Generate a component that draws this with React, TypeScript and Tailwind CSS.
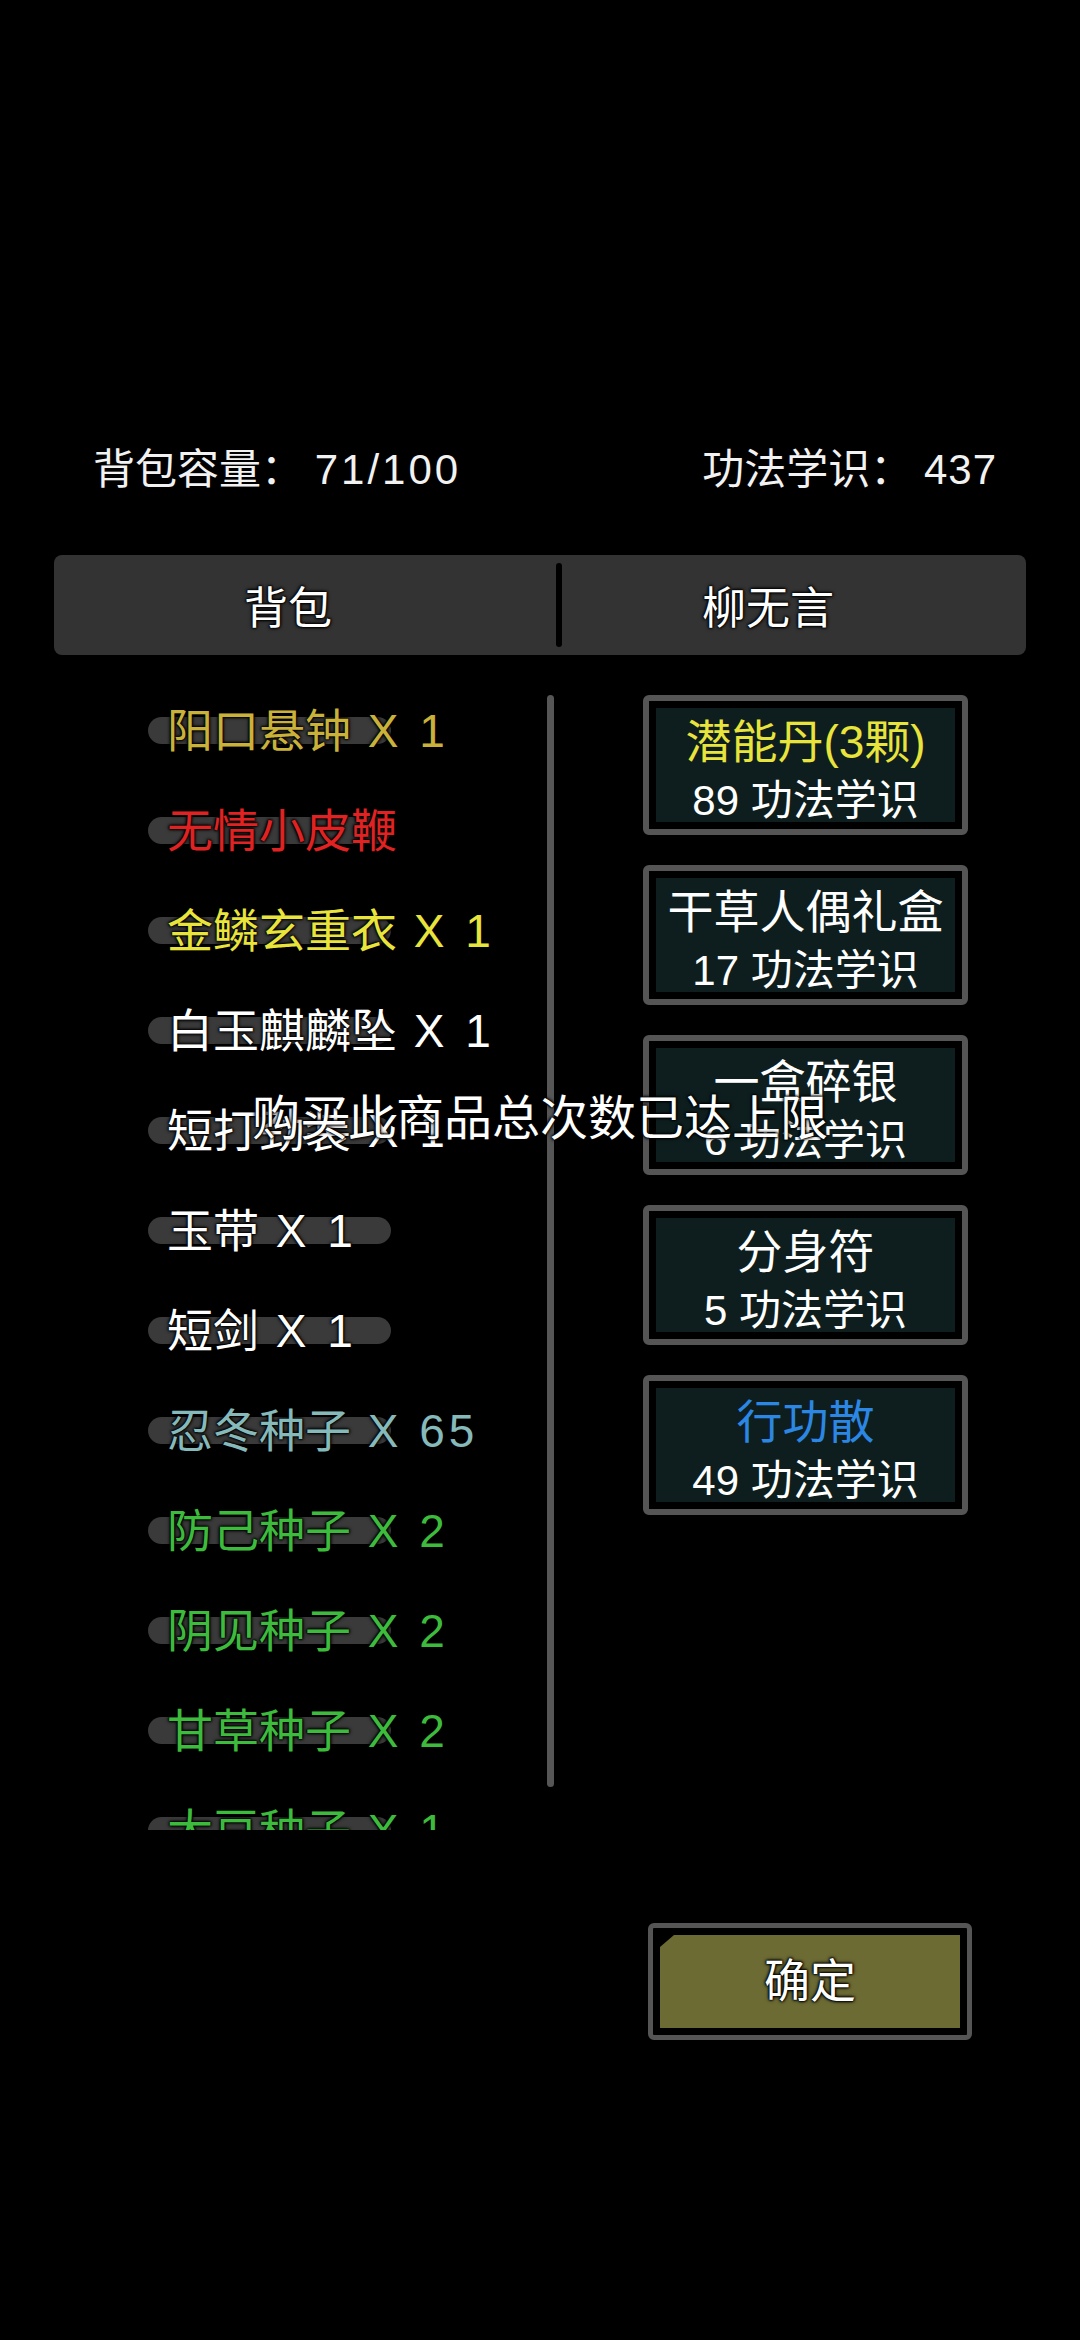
import React from 'react'

type BagItem = {name: string; qty?: number; color: string}

const bagItems: BagItem[] = [
  {name: '阳口悬钟', qty: 1, color: 'text-[#c9b13a]'},
  {name: '无情小皮鞭', color: 'text-[#e12222]'},
  {name: '金鳞玄重衣', qty: 1, color: 'text-[#e8e43c]'},
  {name: '白玉麒麟坠', qty: 1, color: 'text-white'},
  {name: '短打劲装', qty: 1, color: 'text-white'},
  {name: '玉带', qty: 1, color: 'text-white'},
  {name: '短剑', qty: 1, color: 'text-white'},
  {name: '忍冬种子', qty: 65, color: 'text-[#86baba]'},
  {name: '防己种子', qty: 2, color: 'text-[#3dbb3d]'},
  {name: '阴见种子', qty: 2, color: 'text-[#3dbb3d]'},
  {name: '甘草种子', qty: 2, color: 'text-[#3dbb3d]'},
  {name: '大豆种子', qty: 1, color: 'text-[#3dbb3d]'},
]

type ShopItem = {name: string; price: number; color: string}

const shopItems: ShopItem[] = [
  {name: '潜能丹(3颗)', price: 89, color: 'text-[#e8e43c]'},
  {name: '干草人偶礼盒', price: 17, color: 'text-white'},
  {name: '一盒碎银', price: 6, color: 'text-white'},
  {name: '分身符', price: 5, color: 'text-white'},
  {name: '行功散', price: 49, color: 'text-[#2b87e3]'},
]

const outline = '[text-shadow:0_0_2px_#000,0_0_2px_#000,0_0_3px_#000,0_0_4px_#000]'

function BagRow({item}: {item: BagItem}) {
  return (
    <div className="relative h-[100px] flex items-center">
      <div className="absolute left-0 top-[36px] h-[27px] w-[243px] rounded-full bg-[#3a3a3a]" />
      <span className={`relative pl-[19px] text-[46px] leading-[56px] whitespace-nowrap ${item.color} ${outline}`}>
        {item.name}
        {item.qty !== undefined && <span className="tracking-[4px]"> X {item.qty}</span>}
      </span>
    </div>
  )
}

function ShopButton({item}: {item: ShopItem}) {
  return (
    <div className="h-[140px] w-[325px] rounded-[6px] border-[6px] border-[#555555] bg-black p-[7px]">
      <div className="flex h-full flex-col items-center bg-[#0e1e1e] pt-[6px]">
        <span className={`text-[46px] leading-[56px] whitespace-nowrap ${item.color}`}>{item.name}</span>
        <span className="mt-[3px] text-[42px] leading-[56px] text-white whitespace-nowrap">
          {item.price} 功法学识
        </span>
      </div>
    </div>
  )
}

export default function App() {
  return (
    <div className="relative h-[2340px] w-[1080px] overflow-hidden bg-black pt-[445px] font-['Liberation_Sans','Noto_Sans_CJK_SC',sans-serif] text-white">
      {/* header */}
      <div className="flex justify-between pl-[93px] pr-[83px] text-[42px] leading-[50px] text-[#f2f2f2]">
        <span>
          背包容量： <span className="tracking-[3px]">71/100</span>
        </span>
        <span>
          功法学识： <span className="tracking-[1px]">437</span>
        </span>
      </div>

      {/* tabs */}
      <div className="mx-[54px] mt-[60px] flex h-[100px] rounded-[8px] bg-[#333333]">
        <div className={`flex flex-1 items-center justify-center pr-[34px] pt-[8px] text-[44px] ${outline}`}>背包</div>
        <div className="my-[8px] w-[6px] rounded-full bg-black" />
        <div className={`flex w-[464px] items-center justify-center pr-[52px] pt-[8px] text-[44px] ${outline}`}>
          柳无言
        </div>
      </div>

      {/* main */}
      <div className="mt-[26px] flex">
        <div className="ml-[148px] h-[1149px] w-[399px] overflow-hidden">
          {bagItems.map((item) => (
            <BagRow key={item.name} item={item} />
          ))}
        </div>
        <div className="mt-[14px] h-[1092px] w-[7px] rounded-full bg-[#565656]" />
        <div className="ml-[89px] mt-[14px] flex flex-col gap-[30px]">
          {shopItems.map((item) => (
            <ShopButton key={item.name} item={item} />
          ))}
        </div>
      </div>

      {/* confirm */}
      <div className="mt-[93px] flex justify-end pr-[108px]">
        <div className="h-[117px] w-[324px] rounded-[6px] border-[5px] border-[#555555] bg-black p-[7px]">
          <div
            className={`flex h-full items-center justify-center bg-[#6d6b34] text-[46px] [clip-path:polygon(14px_0,100%_0,100%_100%,0_100%,0_12px)] ${outline}`}
          >
            确定
          </div>
        </div>
      </div>

      {/* toast */}
      <div
        className={`absolute left-1/2 top-[1091px] -translate-x-1/2 whitespace-nowrap text-[48px] leading-[56px] text-white ${outline}`}
      >
        购买此商品总次数已达上限
      </div>
    </div>
  )
}
